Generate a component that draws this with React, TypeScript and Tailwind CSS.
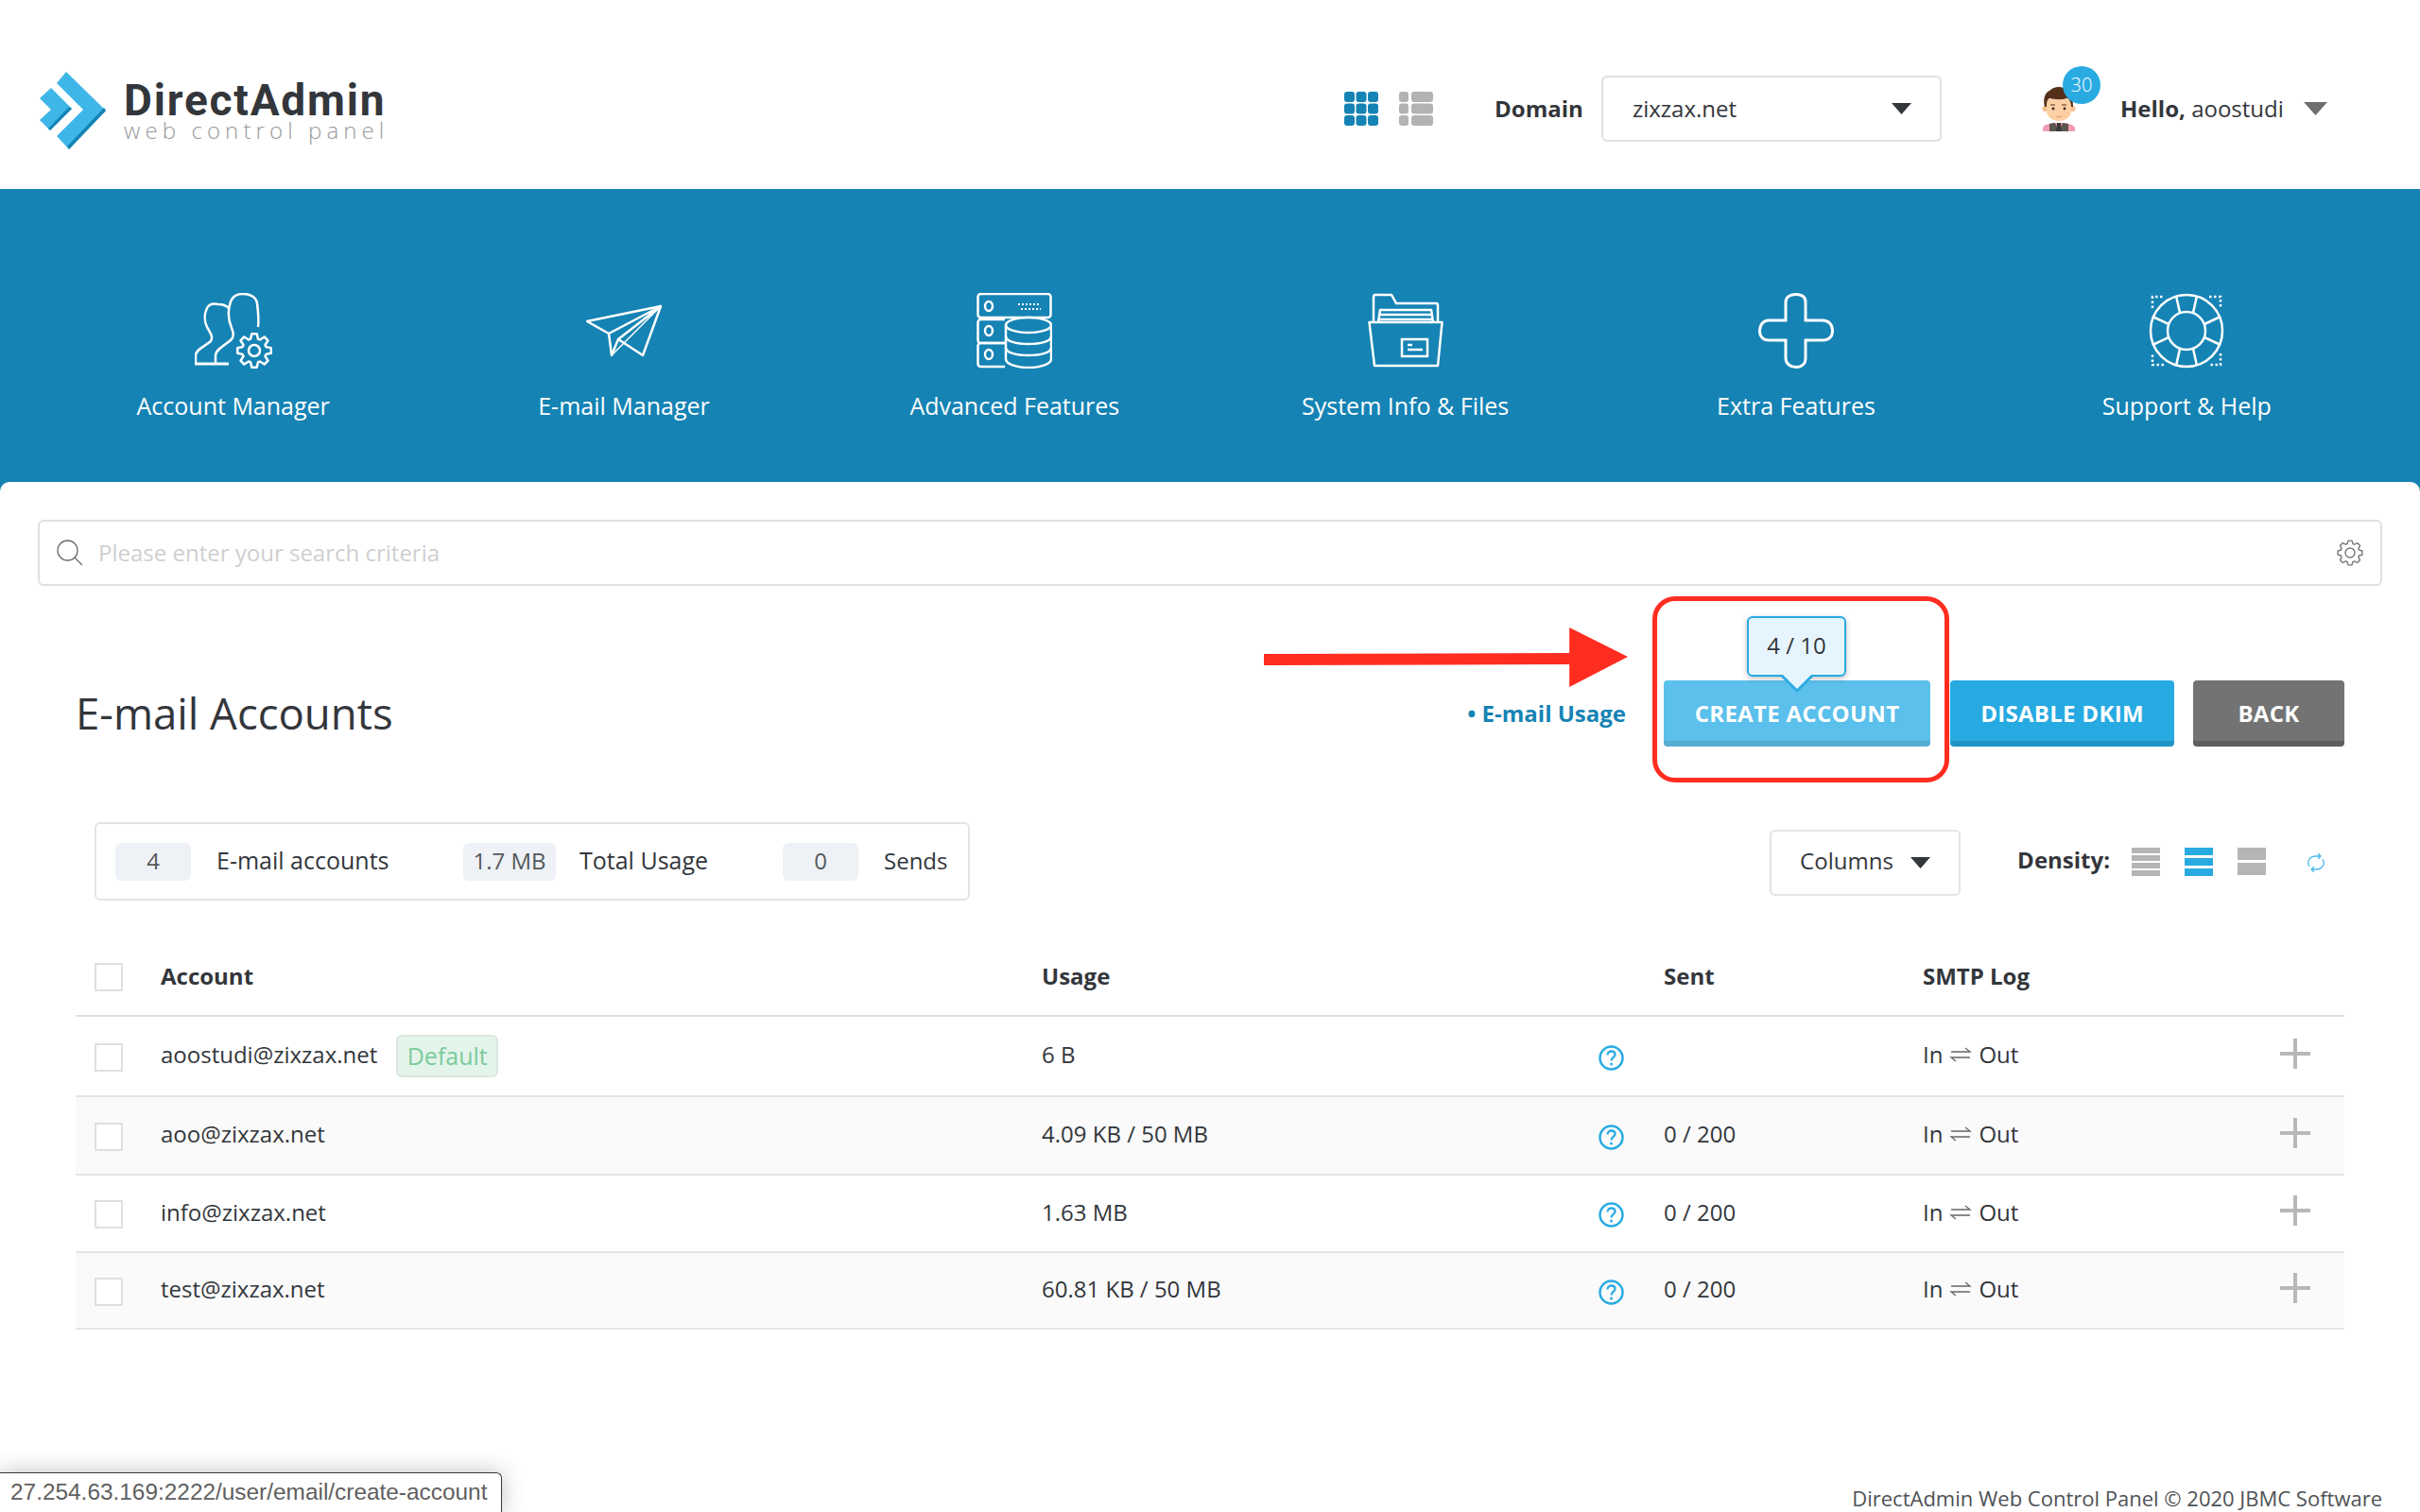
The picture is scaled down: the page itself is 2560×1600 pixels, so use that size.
const NAV = [
  { label: "Account Manager", icon: <AccountIcon /> },
  { label: "E-mail Manager", icon: <PlaneIcon /> },
  { label: "Advanced Features", icon: <ServerIcon /> },
  { label: "System Info & Files", icon: <FolderIcon /> },
  { label: "Extra Features", icon: <PlusIcon /> },
  { label: "Support & Help", icon: <BuoyIcon /> },
]

const ROWS = [
  { email: "aoostudi@zixzax.net", usage: "6 B", sent: "", isDefault: true, height: "h-[85px]", bg: "" },
  { email: "aoo@zixzax.net", usage: "4.09 KB / 50 MB", sent: "0 / 200", isDefault: false, height: "h-[83px]", bg: "bg-[#fafafa]" },
  { email: "info@zixzax.net", usage: "1.63 MB", sent: "0 / 200", isDefault: false, height: "h-[82px]", bg: "" },
  { email: "test@zixzax.net", usage: "60.81 KB / 50 MB", sent: "0 / 200", isDefault: false, height: "h-[81px]", bg: "bg-[#fafafa]" },
]

const GRID = "grid grid-cols-[70px_932px_589px_69px_274px_378px_68px] items-center pl-[20px]"

function gearPath(cx: number, cy: number, outer: number, inner: number, teeth: number) {
  const pts: string[] = []
  const step = (Math.PI * 2) / teeth
  for (let i = 0; i < teeth; i++) {
    const a = i * step
    const offsets: [number, number][] = [
      [-0.32, inner],
      [-0.16, outer],
      [0.16, outer],
      [0.32, inner],
    ]
    offsets.forEach(([o, r]) => {
      const t = a + o * step * 1.2
      pts.push(`${(cx + Math.cos(t) * r).toFixed(1)},${(cy + Math.sin(t) * r).toFixed(1)}`)
    })
  }
  return `M${pts.join("L")}Z`
}

function AccountIcon() {
  return (
    <svg width="82" height="80" viewBox="0 0 82 80" fill="none" stroke="white" strokeWidth="2.5">
      <path d="M22 75V66C22 60 32 55 38 50C42 46 41 42 39 37C35 28 35 18 38 9C40 4 45 1 51 1C58 1 65 4 66 11C67 19 68 28 67 36" />
      <path d="M1 76V66C1 60 10 57 17 51C20 46 16 42 13 36C10 30 10 22 13 16C15 12 20 11 25 12C29 12 33 13 36 16" />
      <path d="M0 75H36" strokeWidth="3" />
      <path d={gearPath(63, 61, 18, 13, 8)} strokeLinejoin="round" />
      <circle cx="63" cy="61" r="6" />
    </svg>
  )
}

function PlaneIcon() {
  return (
    <svg width="80" height="80" viewBox="0 0 80 80" fill="none" stroke="white" strokeWidth="2.5" strokeLinejoin="round">
      <path d="M79 14L1 30L24 43L27 66L34 49L60 66Z" />
      <path d="M24 43L79 14L34 49" />
      <path d="M27 66L79 14" strokeWidth="1.5" />
    </svg>
  )
}

function ServerIcon() {
  return (
    <svg width="80" height="80" viewBox="0 0 80 80" fill="none" stroke="white" strokeWidth="2.5">
      <rect x="1.5" y="1" width="77" height="25" rx="3" />
      <path d="M30 28H4.5a3 3 0 0 0-3 3v19a3 3 0 0 0 3 3H30" />
      <path d="M30 53H4.5a3 3 0 0 0-3 3v19a3 3 0 0 0 3 3H30" />
      <ellipse cx="13" cy="14" rx="4" ry="5" />
      <ellipse cx="13" cy="40" rx="4" ry="5" />
      <ellipse cx="13" cy="65" rx="4" ry="5" />
      <path d="M44 12H68M47 17H68" strokeDasharray="2 2" strokeWidth="2" />
      <ellipse cx="55" cy="34" rx="24" ry="8" fill="#1583b4" />
      <path d="M31 34V70C31 75 42 79 55 79C68 79 79 75 79 70V34" />
      <path d="M31 46C31 51 42 54 55 54C68 54 79 51 79 46" />
      <path d="M31 58C31 63 42 66 55 66C68 66 79 63 79 58" />
    </svg>
  )
}

function FolderIcon() {
  return (
    <svg width="80" height="80" viewBox="0 0 80 80" fill="none" stroke="white" strokeWidth="2.5">
      <path d="M6 31V4Q6 2 8 2H25L30 11H72Q74 11 74 13V31" />
      <path d="M11 31L13 18H67L69 31" />
      <path d="M12 23H68M11 28H69" />
      <path d="M1.5 31H78.5L74 77H7Z" strokeLinejoin="round" />
      <rect x="36" y="49" width="27" height="18" strokeWidth="2.5" />
      <path d="M42 55H47M42 60H58" />
    </svg>
  )
}

function PlusIcon() {
  return (
    <svg width="80" height="80" viewBox="0 0 80 80" fill="none" stroke="white" strokeWidth="3">
      <path d="M29 29V10C29 4 34 1.5 40 1.5C46 1.5 50 4 50 10V29H68C75 29 78.5 34 78.5 40C78.5 46 75 50 68 50H50V69C50 75 46 78.5 40 78.5C34 78.5 29 75 29 69V50H11C5 50 1.5 46 1.5 40C1.5 34 5 29 11 29Z" />
    </svg>
  )
}

function BuoyIcon() {
  return (
    <svg width="80" height="80" viewBox="0 0 80 80" fill="none" stroke="white" strokeWidth="2.5">
      <path d="M4 16V4H16M64 4H76V16M76 64V76H64M16 76H4V64" strokeDasharray="2.5 2.5" />
      <circle cx="40" cy="40" r="38" />
      <circle cx="40" cy="40" r="20" />
      <path d="M33 21L29 3M47 21L51 3M33 59L29 77M47 59L51 77M21 33L4 25M21 47L4 55M59 33L76 25M59 47L76 55" />
    </svg>
  )
}

function Logo() {
  return (
    <div className="mt-[3px] flex items-start">
      <svg width="73" height="84" viewBox="41 75 73 84" className="shrink-0">
        <polygon points="70,76 112,117 73,158 60,144 88,116 60,88" fill="#3fb6e8" />
        <polygon points="112,117 73,158 71,155 110,114" fill="#1583b4" />
        <polygon points="54,93 76,115 53,138 42,127 54,116 42,104" fill="#3fb6e8" />
        <polygon points="76,115 53,138 51,136 73,113" fill="#1583b4" />
      </svg>
      <div className="ml-[17px] flex w-[277px] flex-col">
        <span className="mt-[12px] whitespace-nowrap font-['Roboto',sans-serif] text-[46px] leading-[38px] font-bold tracking-[1.8px] text-[#33363b]">
          DirectAdmin
        </span>
        <span className="whitespace-nowrap text-[24px] leading-[26px] font-light tracking-[5.1px] text-[#9a9a9e]">
          web control panel
        </span>
      </div>
    </div>
  )
}

function Caret({ color = "#33363b", width = 21, height = 12 }: { color?: string; width?: number; height?: number }) {
  return (
    <svg width={width} height={height} viewBox="0 0 22 12" preserveAspectRatio="none" className="shrink-0">
      <polygon points="0,0 22,0 11,12" fill={color} />
    </svg>
  )
}

function GridIcon() {
  return (
    <svg width="36" height="36" viewBox="0 0 36 36" fill="#1583b4">
      {[0, 12.5, 25].map((y) =>
        [0, 12.5, 25].map((x) => <rect key={`${x}-${y}`} x={x} y={y} width="11" height="11" rx="3" />)
      )}
    </svg>
  )
}

function ListIcon() {
  return (
    <svg width="36" height="36" viewBox="0 0 36 36" fill="#b3b3b3">
      {[0, 12.5, 25].map((y) => (
        <g key={y}>
          <rect x="0" y={y} width="10" height="11" rx="3" />
          <rect x="13" y={y} width="23" height="11" rx="3" />
        </g>
      ))}
    </svg>
  )
}

function Avatar() {
  return (
    <svg width="36" height="48" viewBox="0 0 36 48">
      <path d="M1 48V44C2 41 8 39 18 39C28 39 34 41 35 44V48Z" fill="#f29bb1" />
      <path d="M8 40L14 39L17 48H8ZM28 40L22 39L19 48H28Z" fill="#5c5650" />
      <path d="M16 39H20L21 48H15Z" fill="#3a3a3a" />
      <circle cx="3.5" cy="24" r="3" fill="#f7bd8c" />
      <circle cx="32.5" cy="24" r="3" fill="#f7bd8c" />
      <path d="M5 14H31V26C31 33 25 37 18 37C11 37 5 33 5 26Z" fill="#fccfa4" />
      <path d="M3 22C1 14 3 7 8 5C12 1 18 0 23 2C29 3 33 9 33 22H31C31 17 29 14 27 13C20 15 12 14 8 13C5 15 5 18 5 22Z" fill="#54301b" />
      <path d="M9 20H14M21 20H26" stroke="#54301b" strokeWidth="1.2" />
      <circle cx="12" cy="24" r="1.4" fill="#3b2a1c" />
      <circle cx="24" cy="24" r="1.4" fill="#3b2a1c" />
      <path d="M15 32Q18 34 21 32" stroke="#e09a70" strokeWidth="1" fill="none" />
    </svg>
  )
}

function DensityIcon({ bars, color }: { bars: number[]; color: string }) {
  return (
    <svg width="30" height="30" viewBox="0 0 30 30" fill={color}>
      {bars.map((y, i) => (
        <rect key={i} x="0" y={y} width="30" height={bars.length === 4 ? 6 : bars.length === 3 ? 8 : 13} />
      ))}
    </svg>
  )
}

function Checkbox() {
  return <div className="mt-[2px] h-[30px] w-[30px] border-2 border-[#dfdfdf] bg-white" />
}

function Hint() {
  return (
    <svg width="27" height="27" viewBox="0 0 27 27" fill="none" className="mt-[3px]">
      <circle cx="13.5" cy="13.5" r="12" stroke="#29abe2" strokeWidth="2.5" />
      <path d="M9.5 10.5C9.5 8 11.5 6.5 13.5 6.5C16 6.5 17.5 8 17.5 10C17.5 13 13.5 13 13.5 16.5" stroke="#29abe2" strokeWidth="2.3" />
      <circle cx="13.5" cy="20" r="1.5" fill="#29abe2" />
    </svg>
  )
}

function Arrows() {
  return (
    <svg width="24" height="16" viewBox="0 0 24 16" fill="none" stroke="#666" strokeWidth="1.3" className="mx-[7px]">
      <path d="M2 5H22L17 1M22 11H2L7 15" />
    </svg>
  )
}

export default function App() {
  return (
    <div className="relative flex min-h-[1600px] w-full flex-col overflow-hidden bg-white font-['Open_Sans',sans-serif] text-[24px] text-[#33363b]">
      {/* Top bar */}
      <header className="flex h-[200px] items-center pt-[30px] pl-[41px]">
        <Logo />
        <div className="ml-[1014px] flex items-center gap-[22px]">
          <GridIcon />
          <ListIcon />
        </div>
        <span className="ml-[65px] w-[113px] pb-[1px] font-bold">Domain</span>
        <div className="flex h-[70px] w-[360px] items-center justify-between rounded-[6px] border-2 border-[#e0e0e0] pr-[30px] pl-[31px]">
          <span className="pb-[1px]">zixzax.net</span>
          <Caret />
        </div>
        <div className="relative ml-[106px] flex items-center">
          <Avatar />
          <div className="absolute top-[-21px] left-[22px] flex h-[40px] w-[40px] items-center justify-center rounded-full bg-[#29abe2] text-[20px] font-light text-white">
            30
          </div>
        </div>
        <span className="ml-[47px] pb-[1px]">
          <b className="font-bold">Hello,</b> aoostudi
        </span>
        <span className="ml-[21px]">
          <Caret color="#6f6f6f" width={25} height={14} />
        </span>
      </header>

      {/* Main navigation */}
      <nav className="grid h-[320px] grid-cols-6 bg-[#1583b4] px-[40px] pt-[110px]">
        {NAV.map((item) => (
          <div key={item.label} className="flex flex-col items-center text-white">
            <div className="flex h-[80px] items-center">{item.icon}</div>
            <span className="mt-[22px] text-[25px] leading-[34px]">{item.label}</span>
          </div>
        ))}
      </nav>

      {/* Content */}
      <main className="-mt-[10px] flex-1 rounded-t-[10px] bg-white">
        <div className="mx-[40px] mt-[40px] flex h-[70px] items-center justify-between rounded-[6px] border-2 border-[#e0e0e0] pr-[18px] pl-[18px]">
          <div className="flex items-center gap-[16px]">
            <svg width="28" height="28" viewBox="0 0 28 28" fill="none" stroke="#6d6d6d" strokeWidth="1.3">
              <circle cx="11.5" cy="11.5" r="10.5" />
              <path d="M19 19L27 27" />
            </svg>
            <span className="text-[#cfcfcf]">Please enter your search criteria</span>
          </div>
          <svg width="28" height="28" viewBox="0 0 28 28" fill="none" stroke="#777" strokeWidth="1.4">
            <path d={gearPath(14, 14, 13, 10, 8)} strokeLinejoin="round" />
            <circle cx="14" cy="14" r="5" />
          </svg>
        </div>

        <div className="mt-[100px] flex h-[70px] items-center pr-[80px] pl-[80px]">
          <h1 className="text-[45.5px] leading-none font-normal">E-mail Accounts</h1>
          <a className="mr-[40px] ml-auto font-bold text-[#1583b4]">• E-mail Usage</a>
          <button className="h-[70px] w-[282px] rounded-[4px] border-b-[6px] border-[#56add2] bg-[#5bc0eb] pt-[5px] font-bold tracking-[0.3px] text-white">
            CREATE ACCOUNT
          </button>
          <button className="ml-[21px] h-[70px] w-[237px] rounded-[4px] border-b-[6px] border-[#1f93c4] bg-[#27aae1] pt-[5px] font-bold tracking-[0.3px] text-white">
            DISABLE DKIM
          </button>
          <button className="ml-[20px] h-[70px] w-[160px] rounded-[4px] border-b-[6px] border-[#5e5e5e] bg-[#737373] pt-[5px] font-bold tracking-[0.3px] text-white">
            BACK
          </button>
        </div>

        <div className="mt-[80px] flex items-center pr-[100px] pl-[100px]">
          <div className="flex h-[83px] w-[926px] items-center rounded-[6px] border-2 border-[#e4e4e4] pl-[20px] text-[25px]">
            <span className="flex h-[40px] w-[80px] items-center justify-center rounded-[6px] bg-[#eef2f6] pb-[2px] text-[24px] text-[#55585c]">4</span>
            <span className="ml-[27px] w-[261px] pb-[2px] font-medium">E-mail accounts</span>
            <span className="flex h-[40px] w-[98px] items-center justify-center rounded-[6px] bg-[#eef2f6] pb-[2px] text-[24px] text-[#55585c]">1.7 MB</span>
            <span className="ml-[25px] w-[215px] pb-[2px] font-medium">Total Usage</span>
            <span className="flex h-[40px] w-[80px] items-center justify-center rounded-[6px] bg-[#eef2f6] pb-[2px] text-[24px] text-[#55585c]">0</span>
            <span className="ml-[27px] pb-[2px] text-[24px] font-medium">Sends</span>
          </div>
          <div className="mt-[2px] ml-auto flex h-[70px] w-[202px] items-center justify-between rounded-[6px] border-2 border-[#e4e4e4] pr-[30px] pl-[30px]">
            <span className="pb-[4px]">Columns</span>
            <Caret />
          </div>
          <span className="ml-[60px] pb-[4px] font-bold">Density:</span>
          <div className="ml-[23px] flex items-center gap-[26px]">
            <DensityIcon bars={[0, 8, 16, 24]} color="#b5b5b5" />
            <DensityIcon bars={[0, 11, 22]} color="#29abe2" />
            <DensityIcon bars={[0, 16]} color="#b5b5b5" />
          </div>
          <svg width="20" height="20" viewBox="0 0 20 20" fill="none" stroke="#4db8e8" strokeWidth="1.3" className="mt-[3px] ml-[43px]">
            <path d="M3 14C0 9 3 3 10 3H14M12 0L15 3L12 6" />
            <path d="M17 6C20 11 17 17 10 17H6M8 14L5 17L8 20" />
          </svg>
        </div>

        {/* Accounts table */}
        <div className="mx-[80px] mt-[37px]">
          <div className={`${GRID} h-[86px] border-b-2 border-[#e0e0e0] pt-[2px] font-bold`}>
            <Checkbox />
            <span>Account</span>
            <span>Usage</span>
            <span />
            <span>Sent</span>
            <span>SMTP Log</span>
            <span />
          </div>
          {ROWS.map((row) => (
            <div key={row.email} className={`${GRID} ${row.height} ${row.bg} border-b-2 border-[#e4e4e4]`}>
              <Checkbox />
              <div className="flex items-center">
                <span className="pb-[3px]">{row.email}</span>
                {row.isDefault && (
                  <span className="ml-[20px] flex h-[45px] w-[108px] items-center justify-center rounded-[6px] border-2 border-[#dde6e0] bg-[#e3f4ea] text-[25px] text-[#7ccb9b]">
                    Default
                  </span>
                )}
              </div>
              <span className="pb-[3px]">{row.usage}</span>
              <Hint />
              <span className="pb-[3px]">{row.sent}</span>
              <span className="flex items-center pb-[3px]">
                In
                <Arrows />
                Out
              </span>
              <svg width="32" height="32" viewBox="0 0 32 32" fill="#b8b8b8" className="-mt-[6px]">
                <rect x="14" y="0" width="4" height="32" />
                <rect x="0" y="14" width="32" height="4" />
              </svg>
            </div>
          ))}
        </div>
      </main>

      <footer className="flex h-[30px] justify-end pr-[40px] text-[22px] leading-[30px] text-[#4f5256]">
        DirectAdmin Web Control Panel © 2020 JBMC Software
      </footer>

      {/* Annotation drawn over the screenshot */}
      <div className="absolute top-[631px] left-[1748px] h-[197px] w-[314px] rounded-[24px] border-[5px] border-[#ff2d20]" />
      <svg width="385" height="64" viewBox="0 0 386 64" className="absolute top-[664px] left-[1337px]">
        <polygon points="0,28 324,27 324,0 386,31 324,63 324,39 0,40" fill="#ff2d20" />
      </svg>

      {/* Limit tooltip */}
      <div className="absolute top-[652px] left-[1848px] flex h-[64px] w-[105px] items-center justify-center rounded-[6px] border-2 border-[#29abe2] bg-[#e6f5fd] pb-[2px] shadow-[0_2px_6px_rgba(0,0,0,0.25)]">
        4 / 10
      </div>
      <svg width="40" height="20" viewBox="0 0 40 20" className="absolute top-[714px] left-[1881px]">
        <polygon points="1,0 39,0 20,19" fill="#29abe2" />
        <polygon points="5,0 35,0 20,15" fill="#e6f5fd" />
      </svg>

      {/* Browser status bubble */}
      <div className="absolute bottom-0 left-0 h-[42px] w-[531px] rounded-tr-[6px] border-t border-r border-[#3a3a3a] bg-white pl-[11px] font-['Liberation_Sans',sans-serif] text-[24.4px] leading-[40px] text-[#5f5f5f] shadow-[0_0_24px_rgba(0,0,0,0.25)]">
        27.254.63.169:2222/user/email/create-account
      </div>
    </div>
  )
}
